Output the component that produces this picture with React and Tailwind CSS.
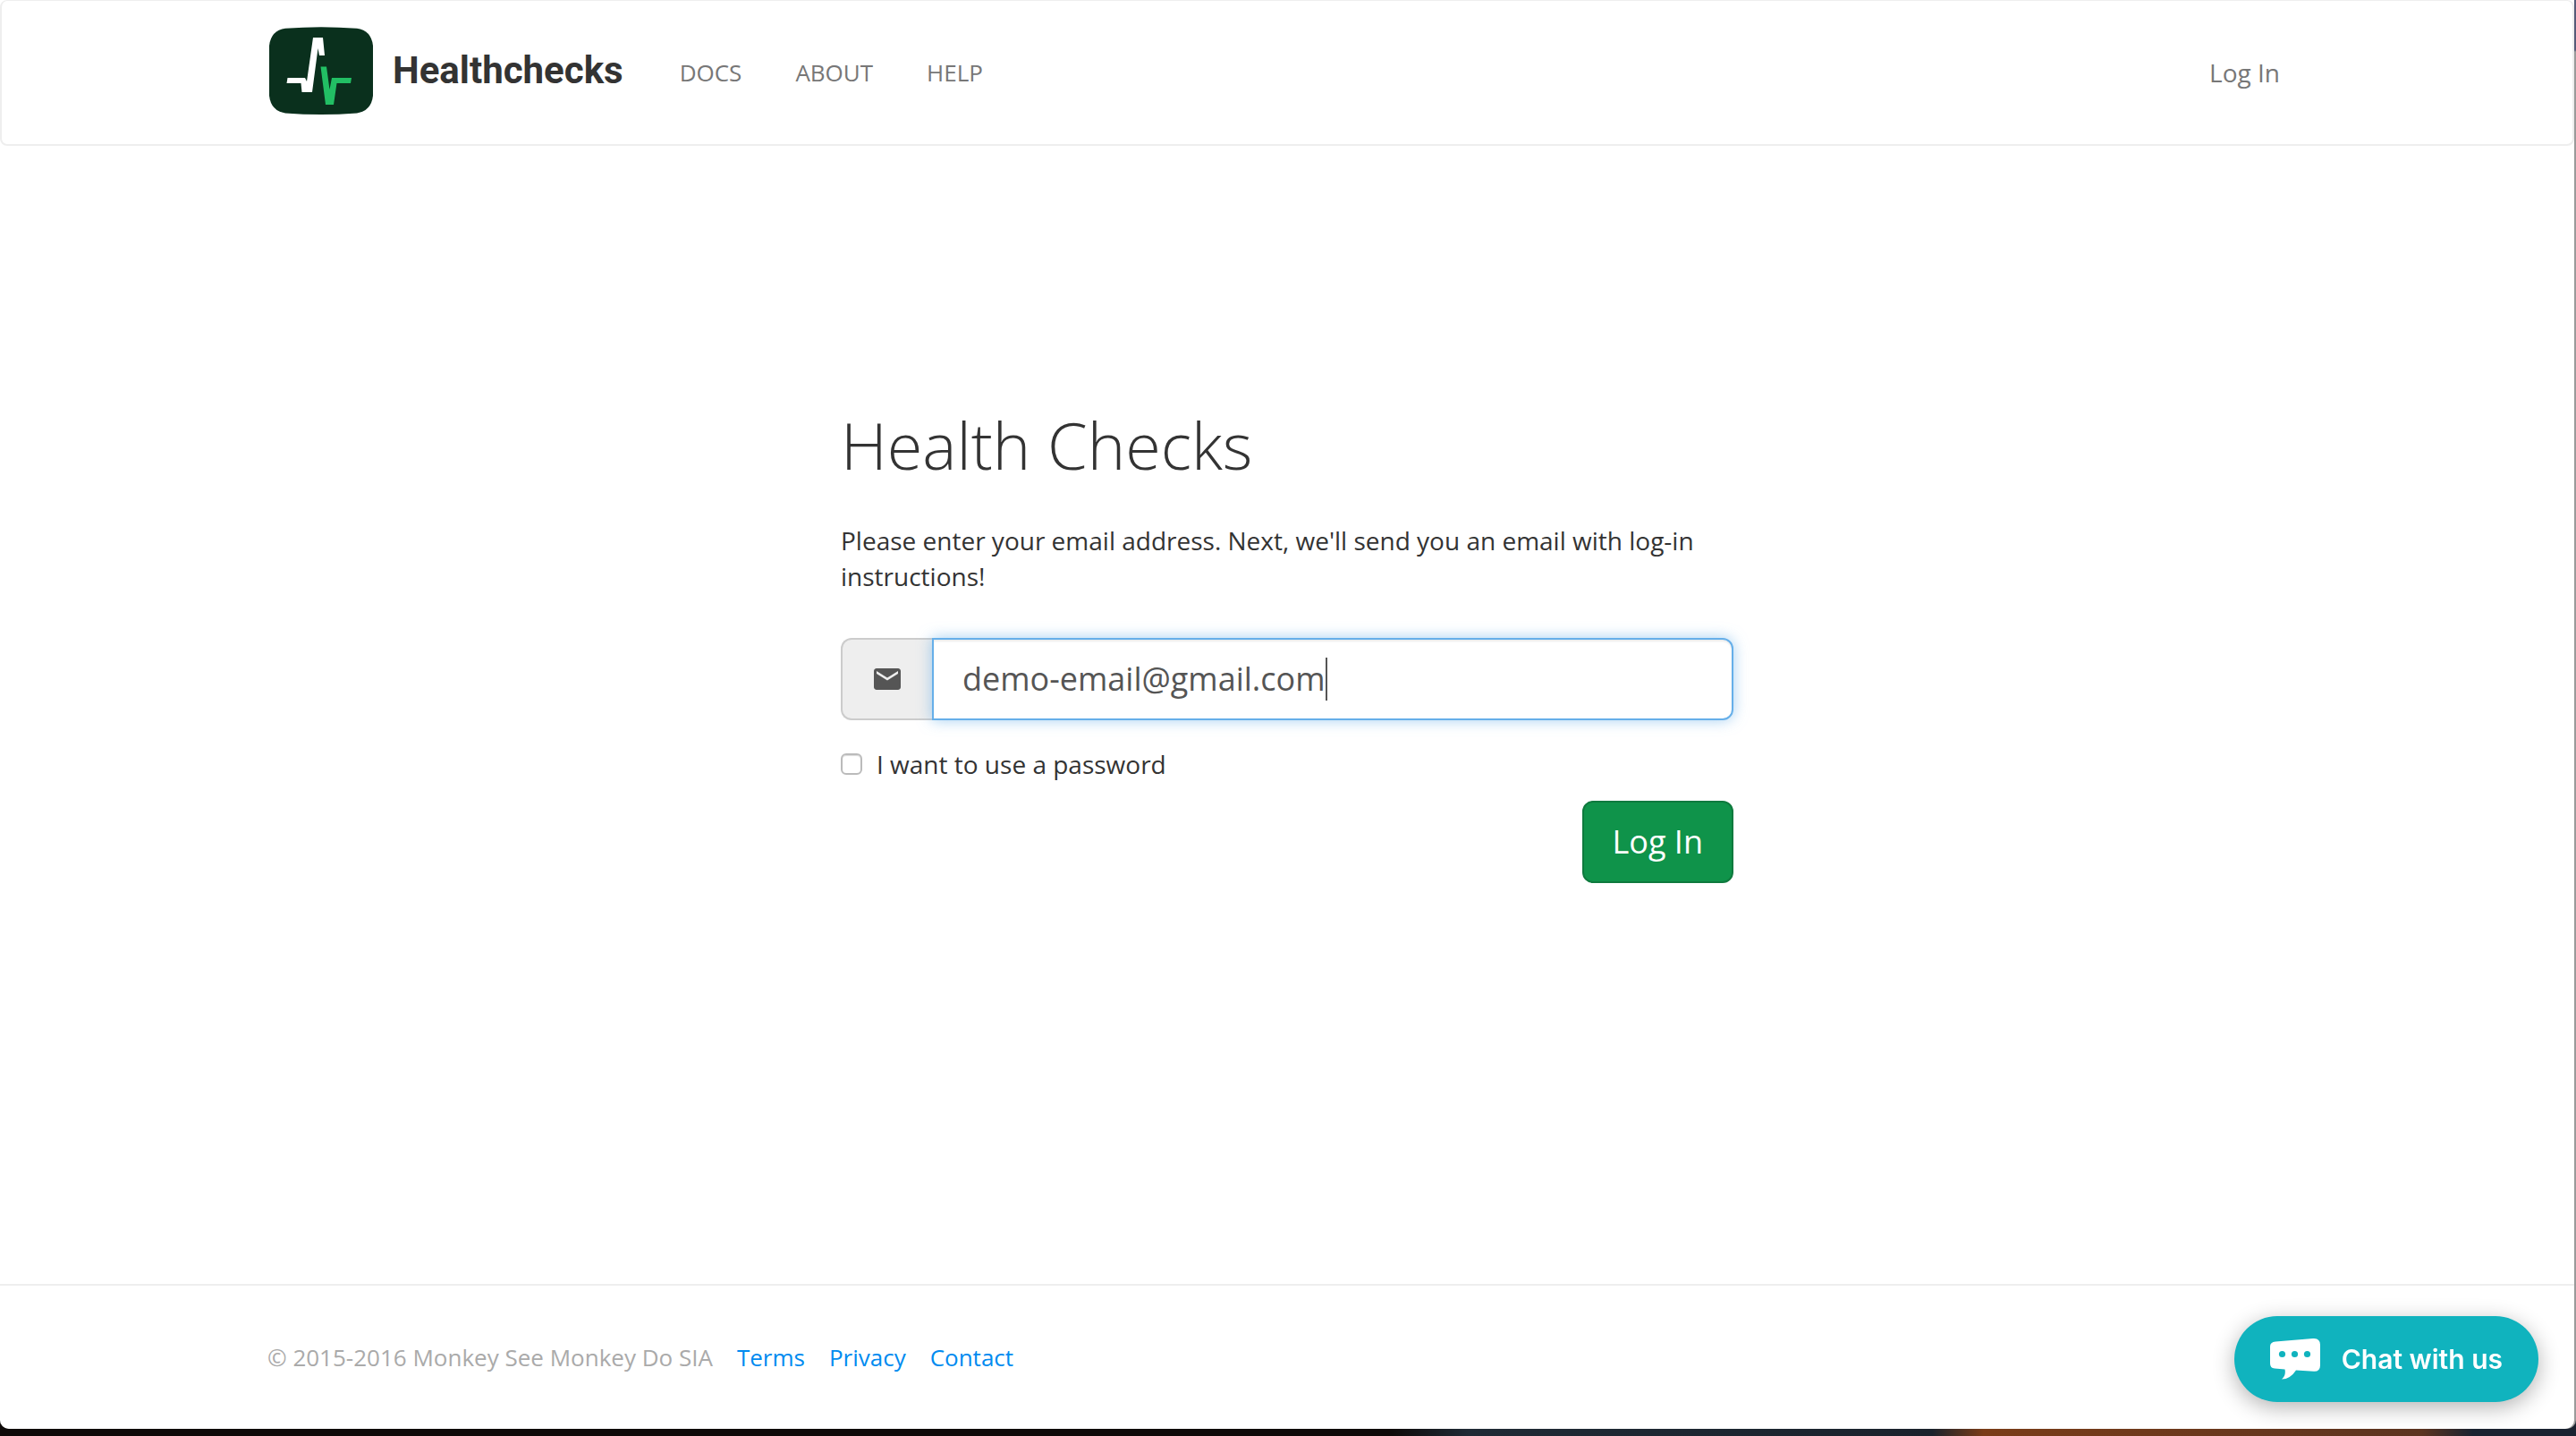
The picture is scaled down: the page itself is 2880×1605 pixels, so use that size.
import React from "react";
import { MdEmail } from "react-icons/md";

const navLinks = ["DOCS", "ABOUT", "HELP"];
const footerLinks = ["Terms", "Privacy", "Contact"];

function Logo() {
  return (
    <svg viewBox="0 0 116 98" className="h-[98px] w-[116px]" aria-hidden="true">
      <path
        fill="#0a301d"
        d="M18 1.8Q58-1.4 98 1.8Q114 4 116 21Q116.600 49 116 77Q114 94 98 96.400Q58 99.400 18 96.400Q2 94 0 77Q-.6 49 0 21Q2 4 18 1.800Z"
      />
      <path fill="#fff" d="M20.500 57H40L42 61L49 12H60L62 32H56L54.500 24L48 73H36.500L35.500 63H19.500Z" />
      <path fill="#22bf64" d="M57.500 44.500H64L67.500 70L70 57H92L91 63H75.500L72 87H63Z" />
    </svg>
  );
}

function ChatIcon() {
  return (
    <svg viewBox="0 0 56 46" className="h-[46px] w-14" aria-hidden="true">
      <path
        fill="#fff"
        d="M6 3.500L48 0Q56-.3 56 7V30Q56 37 49 36.800L29 35.500Q22.500 45.500 13 45.500Q18 41 16.500 34.500L5 33.500Q0 33 0 28V9Q0 4 6 3.500Z"
      />
      <g fill="#10b3be">
        <circle cx="13.500" cy="17.500" r="3.600" />
        <circle cx="27.500" cy="17.500" r="3.600" />
        <circle cx="41.500" cy="17.500" r="3.600" />
      </g>
    </svg>
  );
}

export default function App() {
  return (
    <div className="h-screen bg-[linear-gradient(to_right,#0e0a09_54%,#1f2a35_57%,#1a222c_75%,#7a3c18_77%,#5c3420_94%,#1a2230_96%)] pb-2 font-['Open_Sans',sans-serif] text-[28px] leading-10 text-[#333]">
      <div className="h-full rounded-b-[10px] bg-[linear-gradient(to_bottom,#565a78_56px,#9a9a9a_58px)] pr-0.5">
        <div className="flex h-full flex-col rounded-b-[10px] bg-white">
          <header className="rounded-lg border-2 border-t border-[#eee]">
            <div className="mx-auto flex h-40 w-full max-w-[2276px] items-center">
              <a href="#home" className="flex items-center gap-[22px] pb-1 font-['Roboto',sans-serif] text-[42px] font-bold">
                <Logo />
                Healthchecks
              </a>
              <nav className="ml-[63px] flex flex-1 items-center gap-[60px] text-[26px] text-[#777]">
                {navLinks.map((label) => (
                  <a key={label} href={`#${label.toLowerCase()}`}>{label}</a>
                ))}
                <a href="#login" className="mr-7 ml-auto text-[28px]">Log In</a>
              </nav>
            </div>
          </header>

          <main className="flex-1 pt-[289px]">
            <form className="mx-auto flex w-full max-w-[998px] flex-col" onSubmit={(e) => e.preventDefault()}>
              <h1 className="text-[72px] leading-[90px] font-light">Health Checks</h1>
              <p className="mt-[42px]">Please enter your email address. Next, we'll send you an email with log-in instructions!</p>
              <div className="mt-[49px] flex h-[92px]">
                <label htmlFor="email" aria-label="Email address" className="flex w-[102px] items-center justify-center rounded-l-xl border-2 border-r-0 border-[#ccc] bg-[#eee] text-[36px] text-[#555]">
                  <MdEmail />
                </label>
                <div className="flex min-w-0 flex-1 items-center rounded-r-xl border-2 border-[#66afe9] bg-white px-8 shadow-[inset_0_2px_2px_rgba(0,0,0,0.075),0_0_16px_rgba(102,175,233,0.6)]">
                  <input id="email" type="email" defaultValue="demo-email@gmail.com" className="field-sizing-content text-[36px] leading-[48px] text-[#555] outline-none" />
                  <span className="h-12 w-0.5 bg-[#555]" aria-hidden="true" />
                </div>
              </div>
              <label className="mt-[29px] flex items-center gap-4 self-start">
                <input type="checkbox" className="size-6 appearance-none rounded-md border-2 border-[#bbb] bg-white shadow-[inset_0_1px_1px_rgba(0,0,0,0.15)]" />
                I want to use a password
              </label>
              <button type="submit" className="mt-[21px] h-[92px] self-end rounded-xl border-2 border-[#0f7a3e] bg-[#0f934a] px-8 text-[36px] text-white">Log In</button>
            </form>
          </main>

          <footer className="border-t-2 border-[#eee]">
            <div className="mx-auto flex h-40 w-full max-w-[2280px] items-center gap-[27px] text-[26px] text-[#aaa]">
              <span>© 2015-2016 Monkey See Monkey Do SIA</span>
              {footerLinks.map((label) => (
                <a key={label} href={`#${label.toLowerCase()}`} className="text-[#008bf0]">{label}</a>
              ))}
            </div>
          </footer>
        </div>
      </div>

      <button type="button" className="fixed right-[42px] bottom-[38px] flex h-24 items-center gap-6 rounded-full bg-[#10b3be] px-10 font-['Inter',sans-serif] text-[30px] font-semibold text-white shadow-[0_6px_24px_rgba(0,0,0,0.3)]">
        <ChatIcon />
        Chat with us
      </button>
    </div>
  );
}
